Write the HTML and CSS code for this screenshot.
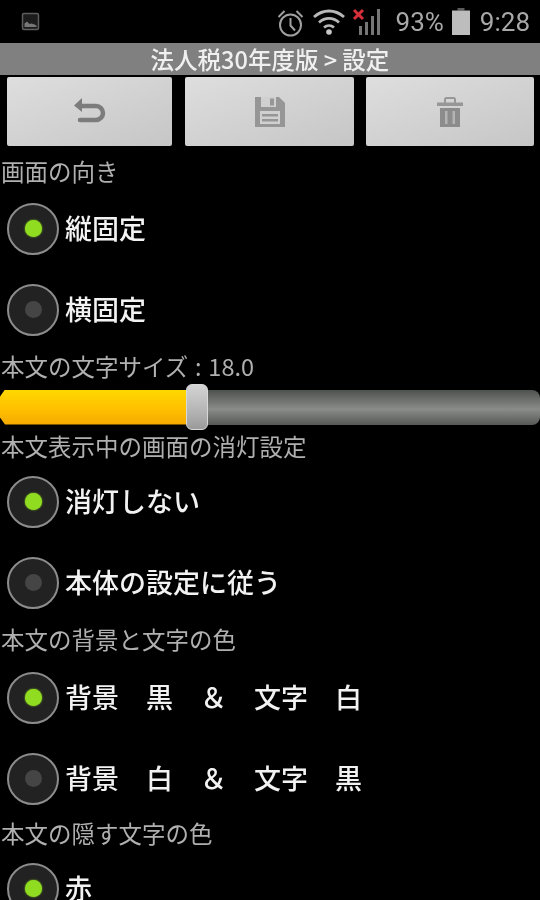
FILE: index.html
```html
<!DOCTYPE html>
<html lang="ja">
<head>
<meta charset="utf-8">
<title>設定</title>
<link rel="stylesheet" href="styles.css">
</head>
<body>
<div class="screen">
  <header class="status">
    <svg class="ic-photo" width="20" height="20" viewBox="0 0 20 20"><rect x="1.500" y="1.500" width="16" height="16" rx="1.500" fill="#1c1c1c" stroke="#5e5e5e" stroke-width="1.500"/><path d="M3.500 15v-3.500l2.500-2 2.500 2.500 2-.5 3 1 2 1V15z" fill="#777"/></svg>
    <div class="status-right">
      <svg class="ic-alarm" width="27" height="29" viewBox="0 0 27 29" fill="none" stroke="#a0a0a0" stroke-width="2"><circle cx="13.500" cy="16" r="10.500"/><path d="M13.500 9v7.500l4.500 5M1.500 8l6-6M25.500 8l-6-6"/></svg>
      <svg class="ic-wifi" width="34" height="26" viewBox="0 0 34 26" fill="none" stroke="#b8b8b8" stroke-width="2.800"><path d="M2 8c9-8 21-8 30 0M7 13.500c6-5.500 14-5.500 20 0M12 18.500c3-2.500 7-2.500 10 0"/><circle cx="17" cy="23" r="2.800" fill="#c8c8c8" stroke="none"/></svg>
      <svg class="ic-signal" width="30" height="28" viewBox="0 0 30 28"><path d="M2 2l9 9M11 2l-9 9" stroke="#d8303a" stroke-width="3"/><g fill="#767676"><rect x="7" y="18" width="3" height="9"/><rect x="13" y="14" width="3" height="13"/><rect x="19" y="8" width="3" height="19"/><rect x="25" y="1" width="3" height="26"/></g></svg>
      <span class="pct">93%</span>
      <svg class="ic-batt" width="18" height="27" viewBox="0 0 18 27"><path d="M5.500 0h7v2.500h-7z" fill="#5a5a5a"/><path d="M0 2.500h18V27H0z" fill="#bdbdbd"/></svg>
      <span class="clock">9:28</span>
    </div>
  </header>
  <h1 class="title">法人税30年度版 &gt; 設定</h1>
  <nav class="toolbar">
    <button class="tool tool-a"><svg width="34" height="28" viewBox="0 0 34 28" fill="none"><path d="M7 8h16a7 7 0 0 1 0 14H7" stroke="#7c7c7c" stroke-width="4.500" stroke-linecap="round"/><path d="M9 0L1 7.500 9 14z" fill="#7c7c7c"/></svg></button>
    <button class="tool tool-b"><svg width="30" height="30" viewBox="0 0 30 30"><path d="M0 0h24l6 6v24H0z" fill="#969696"/><path d="M6 0h15v10H6z" fill="#d0d0d0"/><path d="M15 1.500h4v7h-4z" fill="#969696"/><path d="M5 14h20v13H5z" fill="#d0d0d0"/><path d="M7 17h16v2.500H7zM7 22h16v2.500H7z" fill="#969696"/></svg></button>
    <button class="tool tool-c"><svg width="28" height="30" viewBox="0 0 28 30"><path d="M1 5.500h26v3.500H1z" fill="#979797"/><path d="M9 6V2.500Q9 1 10.500 1h7Q19 1 19 2.500V6" fill="none" stroke="#979797" stroke-width="2"/><path d="M4 11h20v19H4z" fill="#8c8c8c"/><path d="M9 14h2.500v13H9zM16.500 14H19v13h-2.500z" fill="#b4b4b4"/></svg></button>
  </nav>
  <main class="content">
    <p class="label label-first">画面の向き</p>
    <div class="opt on"><span class="radio"><span class="dot"></span></span><span class="opt-text">縦固定</span></div>
    <div class="opt"><span class="radio"><span class="dot"></span></span><span class="opt-text">横固定</span></div>
    <p class="label label-size">本文の文字サイズ : 18.0</p>
    <div class="slider"><div class="fill"></div><div class="rest"></div><div class="thumb"></div></div>
    <p class="label">本文表示中の画面の消灯設定</p>
    <div class="opt on"><span class="radio"><span class="dot"></span></span><span class="opt-text">消灯しない</span></div>
    <div class="opt"><span class="radio"><span class="dot"></span></span><span class="opt-text">本体の設定に従う</span></div>
    <p class="label label-roomy">本文の背景と文字の色</p>
    <div class="opt on"><span class="radio"><span class="dot"></span></span><span class="opt-text">背景　黒　＆　文字　白</span></div>
    <div class="opt"><span class="radio"><span class="dot"></span></span><span class="opt-text">背景　白　＆　文字　黒</span></div>
    <p class="label label-tight">本文の隠す文字の色</p>
    <div class="opt on"><span class="radio"><span class="dot"></span></span><span class="opt-text">赤</span></div>
  </main>
</div>
</body>
</html>
```
FILE: styles.css
```css
* { box-sizing: border-box; }
html, body { margin: 0; height: 100%; background: #000; }
body { overflow: hidden; font-family: "Noto Sans CJK JP", "Roboto", sans-serif; }
.screen { width: 540px; height: 900px; overflow: hidden; background: #000; filter: blur(0.5px); }
.status { height: 43px; display: flex; align-items: center; justify-content: space-between; padding: 0 10px 0 21px; }
.status-right { display: flex; align-items: center; }
.ic-alarm { margin-right: 8px; margin-top: 4px; }
.ic-wifi { margin-right: 6px; }
.ic-signal { margin-right: 14px; }
.pct, .clock { font-family: "Roboto", sans-serif; font-size: 26px; color: #a8a8a8; line-height: 30px; }
.ic-batt { margin: 0 10px 0 8px; }
.title { margin: 0; height: 32px; background: #808080; color: #f0f0f0; font-size: 23.5px; font-weight: 500; line-height: 32px; text-align: center; }
.toolbar { display: flex; padding: 2px 6px 0 7px; height: 71px; }
.tool { height: 69px; border: 0; border-radius: 2px; padding: 0; display: flex; align-items: center; justify-content: center; background: linear-gradient(160deg, #dedede, #c6c6c6); }
.tool svg { filter: blur(0.6px); }
.tool-a { width: 165px; margin-right: 13px; }
.tool-b { width: 169px; margin-right: 12px; }
.tool-c { width: 168px; }
.content { padding-top: 12px; }
.label { margin: 0; height: 28px; line-height: 27px; font-size: 23.5px; color: #b0b0b0; white-space: nowrap; padding-left: 1px; }
.label-first { margin-bottom: 2px; }
.label-size { word-spacing: 1.500px; }
.label-roomy { margin-bottom: 3px; }
.opt { height: 81px; display: flex; align-items: center; padding-left: 7px; }
.opt + .label { margin-top: 3px; }
.opt + .label-tight { margin-top: 1px; }
.radio { width: 52px; height: 52px; border-radius: 50%; border: 2px solid #8c8c8c; background: #222; display: flex; align-items: center; justify-content: center; flex: none; }
.dot { width: 17px; height: 17px; border-radius: 50%; background: #454545; }
.on .dot { background: #90dc20; box-shadow: 0 0 2px #90dc20; }
.opt-text { margin-left: 6px; padding-bottom: 2px; font-size: 27px; font-weight: 500; color: #f2f2f2; white-space: pre; }
.slider { position: relative; display: flex; height: 52px; align-items: center; }
.fill { width: 190px; height: 35px; background: linear-gradient(#ffd800, #ffc000 55%, #f4a800); clip-path: polygon(5px 0, 100% 0, 100% 100%, 5px 100%, 0 calc(100% - 7px), 0 7px); }
.rest { flex: 1; height: 35px; border-radius: 0 8px 8px 0; background: linear-gradient(#4e524e, #8a8c8a 55%, #565856); }
.thumb { position: absolute; left: 186px; top: 3px; width: 22px; height: 46px; border-radius: 6px; border: 1px solid #d8d8d8; background: linear-gradient(#d4d4d4, #b4b4b4 60%, #9a9a9a); }
```
